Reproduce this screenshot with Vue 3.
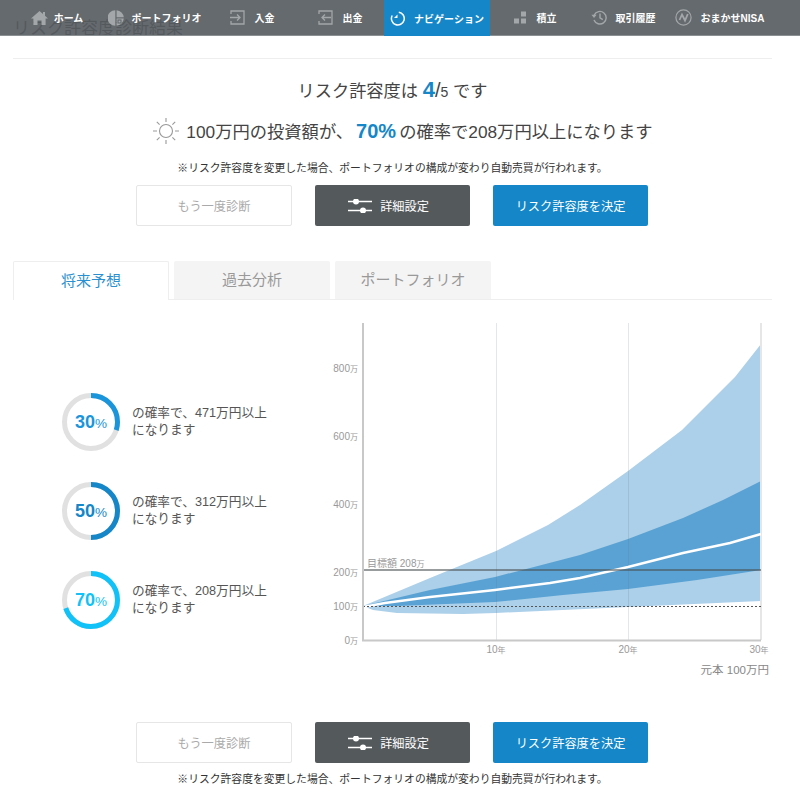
<template>
  <div class="page">
    <nav class="nav">
      <a class="nav-item" style="--w: 88px; --gap: 6px">
        <svg width="17" height="16" viewBox="0 0 17 16"><path d="M8.5 1 L12 4 V2 H14 V5.8 L17 8.5 H14.6 V15 H10.5 V10.5 H6.5 V15 H2.4 V8.5 H0 Z" fill="currentColor" /></svg>
        <span>ホーム</span>
      </a>
      <a class="nav-item" style="--w: 107px; --gap: 8px">
        <svg width="16" height="16" viewBox="0 0 16 16"><path d="M7.3 0.2 V15.8 A7.8 7.8 0 0 1 7.3 0.2 Z M8.6 0.2 A7.8 7.8 0 0 1 15.8 7.3 H8.6 Z M8.6 8.6 H15.8 A7.8 7.8 0 0 1 8.6 15.8 Z" fill="currentColor" /><rect x="10" y="10" width="3" height="3" fill="none" stroke="#5f666a" /></svg>
        <span>ポートフォリオ</span>
      </a>
      <a class="nav-item" style="--w: 88px; --gap: 10px">
        <svg width="15" height="15" viewBox="0 0 15 15" fill="none" stroke="currentColor" stroke-width="1.3"><path d="M1 4 V1 H14 V14 H1 V11" /><path d="M0 7.5 H10 M7 4.5 L10 7.5 L7 10.5" /></svg>
        <span>入金</span>
      </a>
      <a class="nav-item" style="--w: 88px; --gap: 10px">
        <svg width="15" height="15" viewBox="0 0 15 15" fill="none" stroke="currentColor" stroke-width="1.3"><path d="M1 4 V1 H14 V14 H1 V11" /><path d="M13 7.5 H4 M7 4.5 L4 7.5 L7 10.5" /></svg>
        <span>出金</span>
      </a>
      <a class="nav-item active" style="--w: 106px">
        <svg width="15" height="15" viewBox="0 0 15 15" fill="none" stroke="currentColor" stroke-width="1.5"><path d="M8.8 1.2 A6.4 6.4 0 1 1 2.2 4.5" /><path d="M4 7 L7.5 3.4 V7 Z" fill="currentColor" stroke="none" /></svg>
        <span>ナビゲーション</span>
      </a>
      <a class="nav-item" style="--w: 90px; --gap: 10px">
        <svg width="13" height="13" viewBox="0 0 13 13" fill="currentColor"><rect x="0" y="7.5" width="5" height="5" /><rect x="7" y="7.5" width="5" height="5" /><rect x="7" y="0.5" width="5" height="5" /></svg>
        <span>積立</span>
      </a>
      <a class="nav-item" style="--w: 86px">
        <svg width="16" height="15" viewBox="0 0 16 15" fill="none" stroke="currentColor" stroke-width="1.4"><path d="M3.2 5 A6.3 6.3 0 1 1 3 10" /><path d="M0.5 4.8 L3 8 L5.6 4.8 Z" fill="currentColor" stroke="none" /><path d="M9 3.5 V7.8 L11.8 9.6" /></svg>
        <span>取引履歴</span>
      </a>
      <a class="nav-item" style="--w: 107px">
        <svg width="17" height="17" viewBox="0 0 17 17" fill="none" stroke="currentColor"><circle cx="8.5" cy="8.5" r="7.6" stroke-width="1.2" /><path d="M4.5 11 L7 5.5 L10 11.5 L12.8 5" stroke-width="1.8" /></svg>
        <span>おまかせNISA</span>
      </a>
    </nav>

    <main class="content">
      <h1 class="title">リスク許容度診断結果</h1>

      <p class="level">リスク許容度は <b class="level-num">4</b><span class="level-sep">/</span><span class="level-max">5</span> です</p>
      <p class="forecast">
        <svg class="sun" width="28" height="28" viewBox="0 0 28 28" fill="none" stroke="#999" stroke-width="1.1">
          <circle cx="14" cy="14" r="6.5" />
          <path d="M14 1 V5 M14 23 V27 M1 14 H5 M23 14 H27 M4.8 4.8 L7.6 7.6 M20.4 20.4 L23.2 23.2 M23.2 4.8 L20.4 7.6 M7.6 20.4 L4.8 23.2" />
        </svg>
        <span>100万円の投資額が、<b class="accent">70%</b>の確率で208万円以上になります</span>
      </p>
      <p class="note">※リスク許容度を変更した場合、ポートフォリオの構成が変わり自動売買が行われます。</p>

      <div class="actions">
        <button class="btn btn-plain">もう一度診断</button>
        <button class="btn btn-dark">
          <svg width="25" height="14" viewBox="0 0 25 14" fill="none" stroke="#fff" stroke-width="1.4"><path d="M0 2.500 H24 M0 11.500 H24" /><circle cx="8" cy="2.500" r="3" fill="#fff" stroke="none" /><circle cx="15" cy="11.500" r="3" fill="#fff" stroke="none" /></svg>
          詳細設定
        </button>
        <button class="btn btn-blue">リスク許容度を決定</button>
      </div>

      <div class="tabs">
        <div v-for="(tab, i) in tabs" :key="tab" class="tab" :class="{ current: i === 0 }">{{ tab }}</div>
      </div>

      <section class="result">
        <ul class="odds">
          <li v-for="row in odds" :key="row.pct" class="odds-row">
            <div class="ring" :style="{ color: row.color }">
              <svg width="58" height="58" viewBox="0 0 58 58" fill="none" stroke-width="5">
                <circle cx="29" cy="29" r="26.500" stroke="#e1e1e1" />
                <circle
                  cx="29"
                  cy="29"
                  r="26.500"
                  stroke="currentColor"
                  pathLength="100"
                  :stroke-dasharray="`${row.pct} 100`"
                  transform="rotate(-90 29 29)"
                />
              </svg>
              <span class="ring-label">{{ row.pct }}<small>%</small></span>
            </div>
            <p class="odds-text">の確率で、{{ row.amount }}万円以上<br />になります</p>
          </li>
        </ul>

        <svg class="chart" width="450" height="370" viewBox="330 320 450 370">
          <polygon :points="outerBand" fill="#acd0e9" />
          <polygon :points="innerBand" fill="#5aa2d3" />

          <path d="M496.500 323 V640 M628.500 323 V640" stroke="#5a6a75" stroke-opacity="0.16" />
          <path d="M761 323 V640" stroke="#e6e6e6" stroke-width="2" />

          <polyline :points="median" fill="none" stroke="#fff" stroke-width="2.500" />
          <path d="M363 606.500 H761" stroke="#555" stroke-dasharray="2 2" />
          <path d="M363 570 H761" stroke="#4a4f52" stroke-opacity="0.75" stroke-width="1.500" />
          <path d="M363 323 V640.500 H761" fill="none" stroke="#c8c8c8" stroke-width="2" />

          <text v-for="t in yTicks" :key="t.label" class="tick" x="358" :y="t.y + 4" text-anchor="end">{{ t.label }}<tspan class="unit">万</tspan></text>
          <text v-for="t in xTicks" :key="t.label" class="tick" :x="t.x" y="653" text-anchor="middle">{{ t.label }}<tspan class="unit">年</tspan></text>
          <text class="tick" x="367" y="566.500">目標額 208<tspan class="unit">万</tspan></text>
          <text class="base" x="769" y="674" text-anchor="end">元本 100万円</text>
        </svg>
      </section>

      <div class="actions">
        <button class="btn btn-plain">もう一度診断</button>
        <button class="btn btn-dark">
          <svg width="25" height="14" viewBox="0 0 25 14" fill="none" stroke="#fff" stroke-width="1.4"><path d="M0 2.500 H24 M0 11.500 H24" /><circle cx="8" cy="2.500" r="3" fill="#fff" stroke="none" /><circle cx="15" cy="11.500" r="3" fill="#fff" stroke="none" /></svg>
          詳細設定
        </button>
        <button class="btn btn-blue">リスク許容度を決定</button>
      </div>
      <p class="note note-bottom">※リスク許容度を変更した場合、ポートフォリオの構成が変わり自動売買が行われます。</p>
    </main>
  </div>
</template>

<script setup>
const tabs = ['将来予想', '過去分析', 'ポートフォリオ']

const odds = [
  { pct: 30, amount: 471, color: '#1a95dc' },
  { pct: 50, amount: 312, color: '#1587c8' },
  { pct: 70, amount: 208, color: '#10c2f8' },
]

const yTicks = [
  { label: '800', y: 368 },
  { label: '600', y: 436 },
  { label: '400', y: 504 },
  { label: '200', y: 572 },
  { label: '100', y: 606 },
  { label: '0', y: 640 },
]

const xTicks = [
  { label: '10', x: 496 },
  { label: '20', x: 628 },
  { label: '30', x: 759 },
]

// 座標はそのままスクリーンの値
const outerTop = '363,606 430,578 496,551 548,525 580,505 628,471 682,430 735,377 761,344'
const outerBottom = '761,601 628,607 496,613 463,614 397,613 373,610 363,606'
const innerTop = '363,606 430,590 495,577 580,555 628,539 683,518 723,500 761,481'
const innerBottom = '761,570 697,580 628,589 563,595 495,602 397,606 363,606'

const outerBand = `${outerTop} ${outerBottom}`
const innerBand = `${innerTop} ${innerBottom}`
const median = '363,607 385,603 430,597 495,590 550,583 580,578 628,567 683,553 730,543 761,534'
</script>

<style>
body {
  background: #fff;
}
</style>

<style scoped>
.page {
  position: relative;
  width: 800px;
  height: 794px;
  overflow: hidden;
  font-family: "Liberation Sans", "Noto Sans CJK JP", sans-serif;
  color: #444;
}

.nav {
  position: absolute;
  top: 0;
  left: 0;
  right: 0;
  z-index: 2;
  display: flex;
  height: 35px;
  padding-left: 13px;
  background: rgba(84, 90, 94, 0.9);
  border-bottom: 1px solid #8b9093;
}

.nav-item {
  display: flex;
  align-items: center;
  justify-content: center;
  gap: var(--gap, 9px);
  flex: 0 0 var(--w);
  width: var(--w);
  color: #a3a7a9;
}

.nav-item span {
  color: #fff;
  font-size: 10px;
  font-weight: 700;
}

.nav-item.active {
  background: #1587c8;
  color: #fff;
  height: 36px;
}

.content {
  padding: 19px 28px 0 13px;
}

.title {
  margin: 0;
  height: 39px;
  border-bottom: 1px solid #eee;
  font-size: 17px;
  font-weight: 400;
  line-height: 20px;
  color: #555;
}

.level {
  margin: 19px 0 0;
  height: 24px;
  font-size: 17.200px;
  line-height: 24px;
  text-align: center;
}

.level-num {
  font-size: 22px;
  color: #1587c8;
}

.level-sep {
  font-size: 20px;
}

.level-max {
  font-size: 14px;
}

.forecast {
  display: flex;
  align-items: center;
  justify-content: center;
  gap: 6px;
  margin: 17px 0 0;
  padding-left: 20px;
  height: 24px;
  font-size: 17.300px;
  line-height: 24px;
}

.accent {
  margin: 0 3px;
  font-size: 20px;
  color: #1587c8;
}

.note {
  margin: 17px 0 0;
  height: 16px;
  font-size: 10.800px;
  line-height: 16px;
  text-align: center;
  color: #333;
}

.note-bottom {
  margin-top: 8px;
}

.actions {
  display: flex;
  justify-content: center;
  gap: 23px;
  margin-top: 9px;
  padding-right: 1px;
}

.btn {
  display: flex;
  align-items: center;
  justify-content: center;
  gap: 7px;
  width: 155px;
  height: 41px;
  padding: 0;
  border: 1px solid transparent;
  border-radius: 2px;
  font-family: inherit;
  font-size: 12.200px;
}

.btn-plain {
  width: 156px;
  background: #fff;
  border-color: #e6e6e6;
  color: #aaa;
}

.btn-dark {
  padding-right: 8px;
  background: #54595c;
  color: #fff;
}

.btn-blue {
  background: #1587c8;
  color: #fff;
}

.tabs {
  display: flex;
  gap: 5px;
  height: 38px;
  margin-top: 35px;
  border-bottom: 1px solid #eee;
}

.tab {
  width: 156px;
  height: 38px;
  border-radius: 2px 2px 0 0;
  background: #f4f4f4;
  font-size: 15px;
  line-height: 38px;
  text-align: center;
  color: #999;
}

.tab.current {
  height: 39px;
  box-sizing: border-box;
  background: #fff;
  border: 1px solid #eee;
  border-bottom: 0;
  line-height: 37px;
  color: #2b90d0;
}

.result {
  display: flex;
  margin: 20px 0 32px;
}

.odds {
  flex: 0 0 317px;
  display: flex;
  flex-direction: column;
  gap: 31px;
  margin: 73px 0 0;
  padding: 0 0 0 49px;
  box-sizing: border-box;
  list-style: none;
}

.odds-row {
  display: flex;
  align-items: center;
  gap: 12px;
}

.ring {
  position: relative;
  width: 58px;
  height: 58px;
}

.ring svg {
  display: block;
}

.ring-label {
  position: absolute;
  inset: 0;
  display: flex;
  align-items: baseline;
  justify-content: center;
  font-size: 18px;
  font-weight: 700;
  line-height: 58px;
}

.ring-label small {
  font-size: 13.500px;
  font-weight: 400;
}

.odds-text {
  margin: 0;
  font-size: 12.700px;
  line-height: 17px;
  color: #555;
}

.chart {
  display: block;
  flex: none;
}

.tick {
  font-size: 10px;
  fill: #999;
}

.unit {
  font-size: 8px;
}

.base {
  font-size: 11.500px;
  fill: #888;
}
</style>
